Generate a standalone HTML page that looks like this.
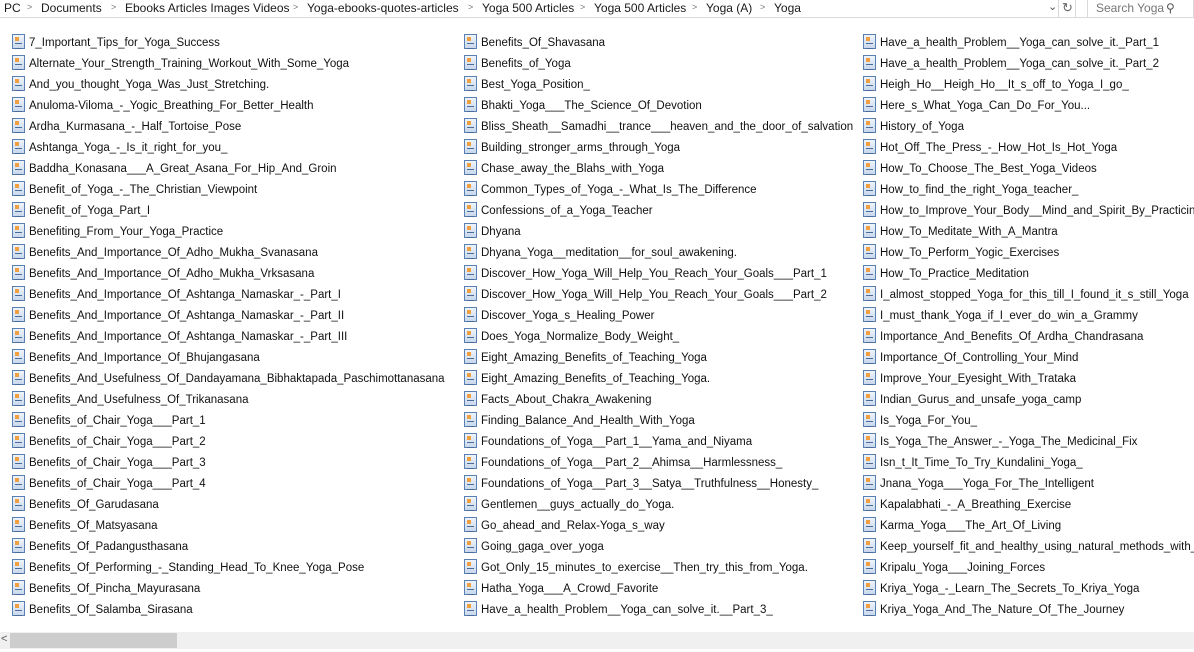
<!DOCTYPE html>
<html><head><meta charset="utf-8"><style>
body{margin:0;width:1194px;height:652px;background:#fff;position:relative;overflow:hidden;font-family:"Liberation Sans",sans-serif;font-size:12px;color:#000}
.bc{position:absolute;top:1px;font-size:12px;color:#1a1a1a;white-space:nowrap}
.ch{position:absolute;top:2px;font-size:9px;color:#777}
.bar{position:absolute;left:0;top:17px;width:1194px;height:1px;background:#d9d9d9}
.r{position:absolute;white-space:nowrap;height:21px;line-height:21px;font-size:11.5px;color:#111}
.r i{position:absolute;left:0;top:1px;width:13px;height:15px;border:1px solid #5a7fb3;background:linear-gradient(#eef4fb,#c8d8ec);box-sizing:border-box}
.r i:before{content:"";position:absolute;left:2px;top:2px;width:4px;height:4px;background:#f0a040}
.r i:after{content:"";position:absolute;left:2px;top:8px;width:7px;height:4px;border-top:1px solid #4a6a9a;border-bottom:1px solid #4a6a9a}
.r span{position:absolute;left:17px}
</style></head><body>
<div class="bc" style="left:4px">PC</div><div class="ch" style="left:27px">&gt;</div>
<div class="bc" style="left:41px">Documents</div><div class="ch" style="left:111px">&gt;</div>
<div class="bc" style="left:125px">Ebooks Articles Images Videos</div><div class="ch" style="left:293px">&gt;</div>
<div class="bc" style="left:307px">Yoga-ebooks-quotes-articles</div><div class="ch" style="left:468px">&gt;</div>
<div class="bc" style="left:482px">Yoga 500 Articles</div><div class="ch" style="left:580px">&gt;</div>
<div class="bc" style="left:594px">Yoga 500 Articles</div><div class="ch" style="left:692px">&gt;</div>
<div class="bc" style="left:706px">Yoga (A)</div><div class="ch" style="left:760px">&gt;</div>
<div class="bc" style="left:774px">Yoga</div>
<div style="position:absolute;left:1048px;top:0;font-size:11px;color:#555">&#8964;</div>
<div style="position:absolute;left:1058px;top:0;width:1px;height:17px;background:#d9d9d9"></div>
<div style="position:absolute;left:1062px;top:0;font-size:13px;color:#666">&#8635;</div>
<div style="position:absolute;left:1075px;top:0;width:1px;height:17px;background:#d9d9d9"></div>
<div style="position:absolute;left:1087px;top:0;width:107px;height:17px;border-left:1px solid #d9d9d9;border-right:1px solid #d9d9d9;box-sizing:border-box"></div>
<div class="bc" style="left:1096px;color:#777">Search Yoga</div>
<div style="position:absolute;left:1166px;top:1px;font-size:12px;color:#555">&#9906;</div>
<div class="bar"></div>
<div id="c"></div>
<div style="position:absolute;left:0;top:632px;width:1194px;height:17px;background:#f0f0f0"></div>
<div style="position:absolute;left:10px;top:633px;width:167px;height:15px;background:#cdcdcd"></div>
<div style="position:absolute;left:1px;top:633px;font-size:11px;color:#555">&lt;</div>
<script>
var cols=[[12,["7_Important_Tips_for_Yoga_Success","Alternate_Your_Strength_Training_Workout_With_Some_Yoga","And_you_thought_Yoga_Was_Just_Stretching.","Anuloma-Viloma_-_Yogic_Breathing_For_Better_Health","Ardha_Kurmasana_-_Half_Tortoise_Pose","Ashtanga_Yoga_-_Is_it_right_for_you_","Baddha_Konasana___A_Great_Asana_For_Hip_And_Groin","Benefit_of_Yoga_-_The_Christian_Viewpoint","Benefit_of_Yoga_Part_I","Benefiting_From_Your_Yoga_Practice","Benefits_And_Importance_Of_Adho_Mukha_Svanasana","Benefits_And_Importance_Of_Adho_Mukha_Vrksasana","Benefits_And_Importance_Of_Ashtanga_Namaskar_-_Part_I","Benefits_And_Importance_Of_Ashtanga_Namaskar_-_Part_II","Benefits_And_Importance_Of_Ashtanga_Namaskar_-_Part_III","Benefits_And_Importance_Of_Bhujangasana","Benefits_And_Usefulness_Of_Dandayamana_Bibhaktapada_Paschimottanasana","Benefits_And_Usefulness_Of_Trikanasana","Benefits_of_Chair_Yoga___Part_1","Benefits_of_Chair_Yoga___Part_2","Benefits_of_Chair_Yoga___Part_3","Benefits_of_Chair_Yoga___Part_4","Benefits_Of_Garudasana","Benefits_Of_Matsyasana","Benefits_Of_Padangusthasana","Benefits_Of_Performing_-_Standing_Head_To_Knee_Yoga_Pose","Benefits_Of_Pincha_Mayurasana","Benefits_Of_Salamba_Sirasana"]],
[464,["Benefits_Of_Shavasana","Benefits_of_Yoga","Best_Yoga_Position_","Bhakti_Yoga___The_Science_Of_Devotion","Bliss_Sheath__Samadhi__trance___heaven_and_the_door_of_salvation","Building_stronger_arms_through_Yoga","Chase_away_the_Blahs_with_Yoga","Common_Types_of_Yoga_-_What_Is_The_Difference","Confessions_of_a_Yoga_Teacher","Dhyana","Dhyana_Yoga__meditation__for_soul_awakening.","Discover_How_Yoga_Will_Help_You_Reach_Your_Goals___Part_1","Discover_How_Yoga_Will_Help_You_Reach_Your_Goals___Part_2","Discover_Yoga_s_Healing_Power","Does_Yoga_Normalize_Body_Weight_","Eight_Amazing_Benefits_of_Teaching_Yoga","Eight_Amazing_Benefits_of_Teaching_Yoga.","Facts_About_Chakra_Awakening","Finding_Balance_And_Health_With_Yoga","Foundations_of_Yoga__Part_1__Yama_and_Niyama","Foundations_of_Yoga__Part_2__Ahimsa__Harmlessness_","Foundations_of_Yoga__Part_3__Satya__Truthfulness__Honesty_","Gentlemen__guys_actually_do_Yoga.","Go_ahead_and_Relax-Yoga_s_way","Going_gaga_over_yoga","Got_Only_15_minutes_to_exercise__Then_try_this_from_Yoga.","Hatha_Yoga___A_Crowd_Favorite","Have_a_health_Problem__Yoga_can_solve_it.__Part_3_"]],
[863,["Have_a_health_Problem__Yoga_can_solve_it._Part_1","Have_a_health_Problem__Yoga_can_solve_it._Part_2","Heigh_Ho__Heigh_Ho__It_s_off_to_Yoga_I_go_","Here_s_What_Yoga_Can_Do_For_You...","History_of_Yoga","Hot_Off_The_Press_-_How_Hot_Is_Hot_Yoga","How_To_Choose_The_Best_Yoga_Videos","How_to_find_the_right_Yoga_teacher_","How_to_Improve_Your_Body__Mind_and_Spirit_By_Practicing_Yoga","How_To_Meditate_With_A_Mantra","How_To_Perform_Yogic_Exercises","How_To_Practice_Meditation","I_almost_stopped_Yoga_for_this_till_I_found_it_s_still_Yoga","I_must_thank_Yoga_if_I_ever_do_win_a_Grammy","Importance_And_Benefits_Of_Ardha_Chandrasana","Importance_Of_Controlling_Your_Mind","Improve_Your_Eyesight_With_Trataka","Indian_Gurus_and_unsafe_yoga_camp","Is_Yoga_For_You_","Is_Yoga_The_Answer_-_Yoga_The_Medicinal_Fix","Isn_t_It_Time_To_Try_Kundalini_Yoga_","Jnana_Yoga___Yoga_For_The_Intelligent","Kapalabhati_-_A_Breathing_Exercise","Karma_Yoga___The_Art_Of_Living","Keep_yourself_fit_and_healthy_using_natural_methods_with_Yoga","Kripalu_Yoga___Joining_Forces","Kriya_Yoga_-_Learn_The_Secrets_To_Kriya_Yoga","Kriya_Yoga_And_The_Nature_Of_The_Journey"]]];
var h="";cols.forEach(function(c){c[1].forEach(function(t,i){h+='<div class="r" style="left:'+c[0]+'px;top:'+(33+i*21)+'px"><i></i><span>'+t+'</span></div>';});});
document.getElementById("c").innerHTML=h;
</script>
</body></html>
